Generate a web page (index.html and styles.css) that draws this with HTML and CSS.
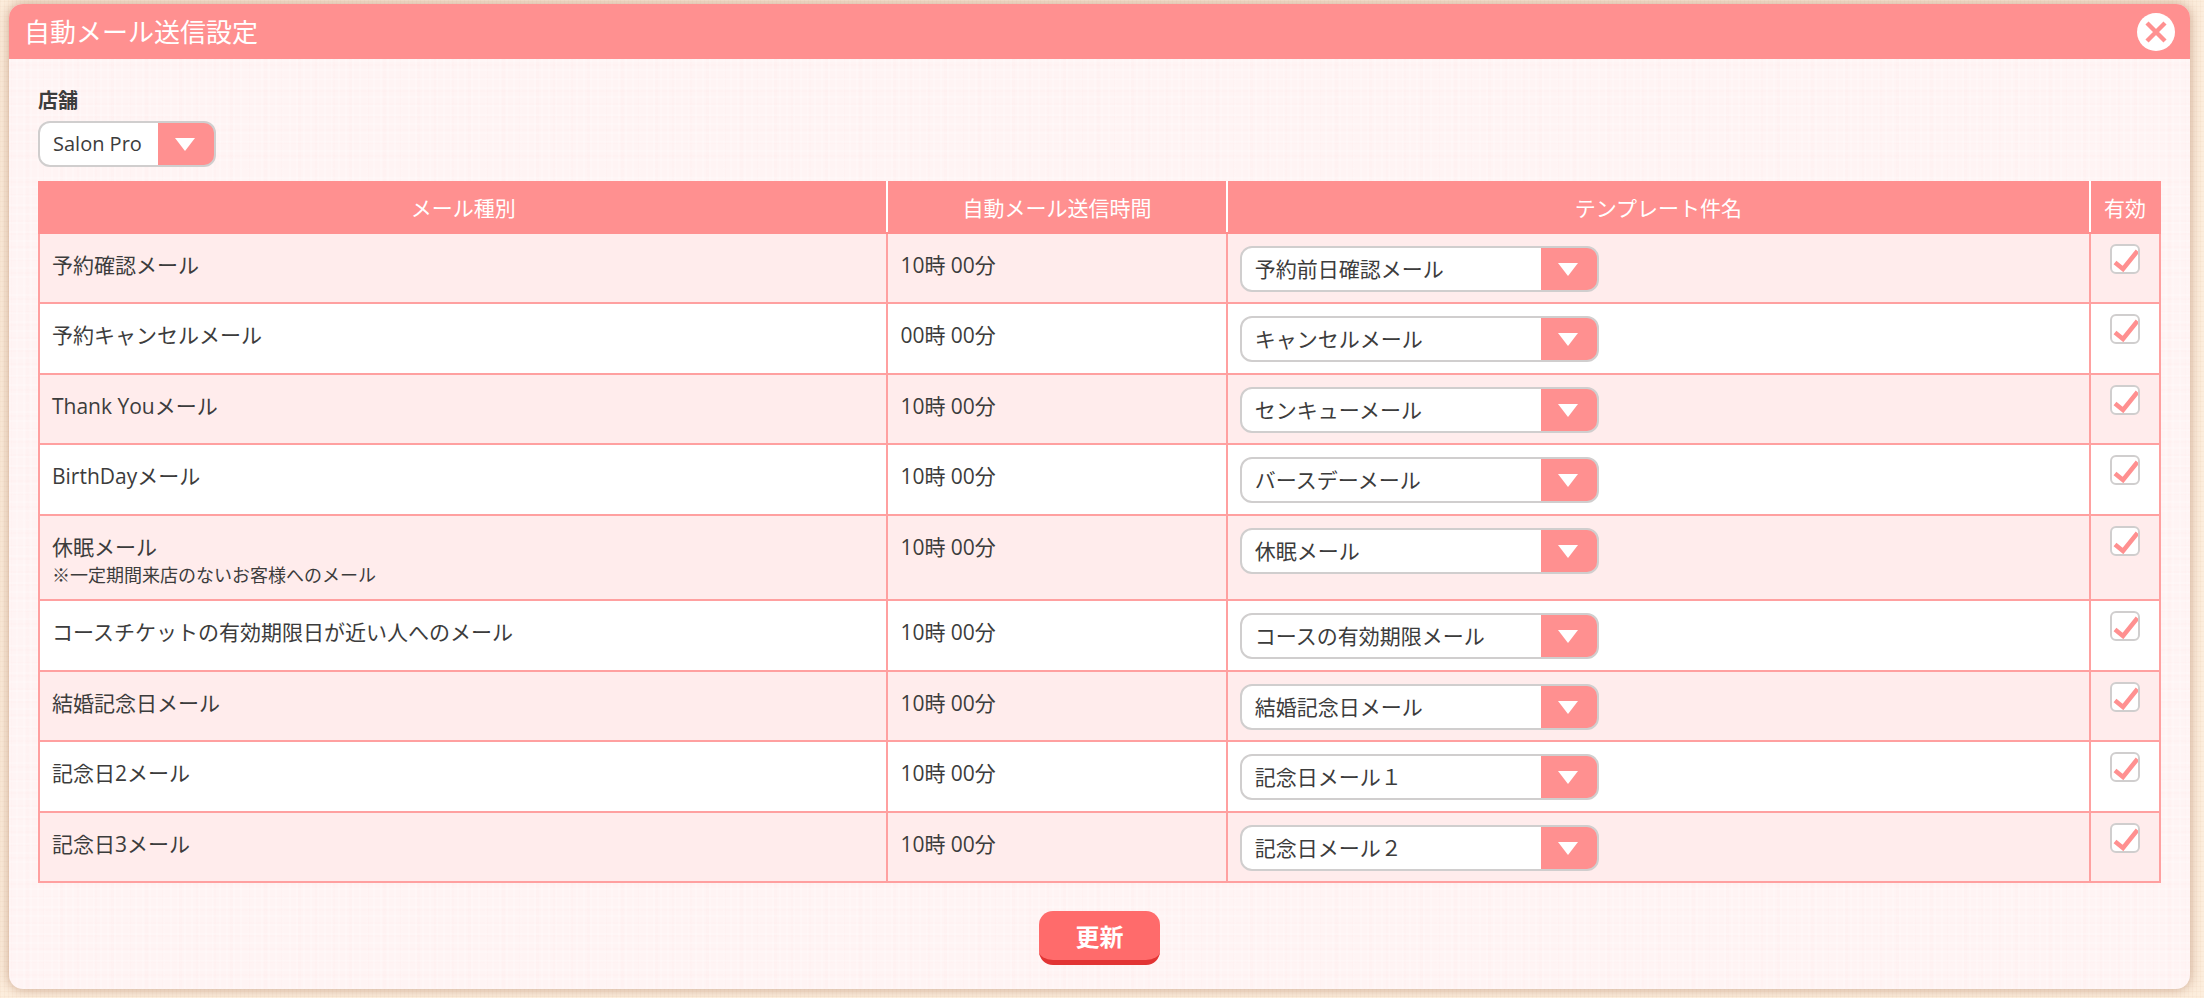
FILE: index.html
```
<!DOCTYPE html>
<html lang="ja">
<head>
  <meta charset="UTF-8">
  <meta name="viewport" content="width=device-width, initial-scale=1.0">
  <title>自動メール送信設定</title>
  <link rel="stylesheet" href="styles.css">
</head>
<body>
  <div class="dialog">
    <div class="dialog-header">
      <h1>自動メール送信設定</h1>
      <button type="button" class="close-btn" aria-label="閉じる">
        <svg viewBox="0 0 38 38">
          <circle cx="19" cy="19" r="19" fill="#fff"/>
          <path d="M10 10 L28 28 M28 10 L10 28" stroke="#ff9090" stroke-width="4.4"/>
        </svg>
      </button>
    </div>

    <form class="dialog-body">
      <label class="shop-label" for="shop">店舗</label>
      <select id="shop" class="select-box shop">
        <option>Salon Pro</option>
      </select>

      <table class="mail-table">
        <thead>
          <tr>
            <th class="col-type">メール種別</th>
            <th class="col-time">自動メール送信時間</th>
            <th class="col-template">テンプレート件名</th>
            <th class="col-active">有効</th>
          </tr>
        </thead>
        <tbody>
          <tr>
            <td>予約確認メール</td>
            <td>10時 00分</td>
            <td class="template"><select class="select-box" aria-label="予約確認メールのテンプレート"><option>予約前日確認メール</option></select></td>
            <td class="active"><input type="checkbox" class="check" aria-label="予約確認メールを有効" checked></td>
          </tr>
          <tr>
            <td>予約キャンセルメール</td>
            <td>00時 00分</td>
            <td class="template"><select class="select-box" aria-label="予約キャンセルメールのテンプレート"><option>キャンセルメール</option></select></td>
            <td class="active"><input type="checkbox" class="check" aria-label="予約キャンセルメールを有効" checked></td>
          </tr>
          <tr>
            <td>Thank Youメール</td>
            <td>10時 00分</td>
            <td class="template"><select class="select-box" aria-label="Thank Youメールのテンプレート"><option>センキューメール</option></select></td>
            <td class="active"><input type="checkbox" class="check" aria-label="Thank Youメールを有効" checked></td>
          </tr>
          <tr>
            <td>BirthDayメール</td>
            <td>10時 00分</td>
            <td class="template"><select class="select-box" aria-label="BirthDayメールのテンプレート"><option>バースデーメール</option></select></td>
            <td class="active"><input type="checkbox" class="check" aria-label="BirthDayメールを有効" checked></td>
          </tr>
          <tr>
            <td>休眠メール<small class="note">※一定期間来店のないお客様へのメール</small></td>
            <td>10時 00分</td>
            <td class="template"><select class="select-box" aria-label="休眠メールのテンプレート"><option>休眠メール</option></select></td>
            <td class="active"><input type="checkbox" class="check" aria-label="休眠メールを有効" checked></td>
          </tr>
          <tr>
            <td>コースチケットの有効期限日が近い人へのメール</td>
            <td>10時 00分</td>
            <td class="template"><select class="select-box" aria-label="コースチケットのテンプレート"><option>コースの有効期限メール</option></select></td>
            <td class="active"><input type="checkbox" class="check" aria-label="コースチケットのメールを有効" checked></td>
          </tr>
          <tr>
            <td>結婚記念日メール</td>
            <td>10時 00分</td>
            <td class="template"><select class="select-box" aria-label="結婚記念日メールのテンプレート"><option>結婚記念日メール</option></select></td>
            <td class="active"><input type="checkbox" class="check" aria-label="結婚記念日メールを有効" checked></td>
          </tr>
          <tr>
            <td>記念日2メール</td>
            <td>10時 00分</td>
            <td class="template"><select class="select-box" aria-label="記念日2メールのテンプレート"><option>記念日メール１</option></select></td>
            <td class="active"><input type="checkbox" class="check" aria-label="記念日2メールを有効" checked></td>
          </tr>
          <tr>
            <td>記念日3メール</td>
            <td>10時 00分</td>
            <td class="template"><select class="select-box" aria-label="記念日3メールのテンプレート"><option>記念日メール２</option></select></td>
            <td class="active"><input type="checkbox" class="check" aria-label="記念日3メールを有効" checked></td>
          </tr>
        </tbody>
      </table>

      <div class="actions">
        <button type="submit" class="update-btn">更新</button>
      </div>
    </form>
  </div>
</body>
</html>
```
FILE: styles.css
```
* {
  box-sizing: border-box;
}

body {
  margin: 0;
  padding: 4px 14px 8px 9px;
  font-family: "Open Sans", "Noto Sans CJK JP", sans-serif;
  font-size: 21px;
  line-height: 28px;
  color: #3c3c3c;
  /* linen texture */
  background-color: #fdeedd;
  background-image:
    repeating-linear-gradient(90deg, rgba(222, 180, 140, 0.08) 0 1px, transparent 1px 4px),
    repeating-linear-gradient(0deg, rgba(222, 180, 140, 0.08) 0 1px, transparent 1px 5px);
}

.dialog {
  border-radius: 14px;
  overflow: hidden;
  box-shadow: 0 0 12px rgba(150, 90, 60, 0.5);
  /* woven look from threads with different spacing */
  background-color: #fff4f4;
  background-image:
    repeating-linear-gradient(90deg, rgba(255, 255, 255, 0.2) 0 2px, transparent 2px 7px),
    repeating-linear-gradient(0deg, rgba(255, 255, 255, 0.2) 0 2px, transparent 2px 9px),
    repeating-linear-gradient(90deg, rgba(255, 225, 225, 0.1) 0 3px, transparent 3px 17px),
    repeating-linear-gradient(0deg, rgba(255, 225, 225, 0.1) 0 2px, transparent 2px 13px);
}

.dialog-header {
  display: flex;
  align-items: center;
  justify-content: space-between;
  height: 55px;
  padding: 0 15px;
  background: #ff9090;
  color: #fff;
}

.dialog-header h1 {
  margin: 0;
  font-size: 26px;
  font-weight: normal;
}

.close-btn {
  width: 38px;
  height: 38px;
  padding: 0;
  border: none;
  background: none;
  cursor: pointer;
}

.close-btn svg {
  display: block;
  width: 100%;
  height: 100%;
  fill: none;
}

.dialog-body {
  padding: 28px 29px 24px;
}

.shop-label {
  display: block;
  margin-bottom: 6px;
  font-size: 20px;
  font-weight: bold;
}

.select-box {
  display: block;
  width: 359px;
  height: 46px;
  padding: 0 72px 0 13px;
  border: 2px solid #d0cece;
  border-radius: 12px;
  appearance: none;
  font: inherit;
  color: inherit;
  background-color: #fff;
  background-image:
    url("data:image/svg+xml,%3Csvg xmlns='http://www.w3.org/2000/svg' width='20' height='13'%3E%3Cpath d='M0 0h20l-10 13z' fill='%23fff'/%3E%3C/svg%3E"),
    linear-gradient(#ff9090, #ff9090);
  background-repeat: no-repeat;
  background-position: right 19px center, right top;
  background-size: 20px 13px, 56px 100%;
}

.select-box.shop {
  width: auto;
  font-size: 20px;
}

.mail-table {
  width: 100%;
  margin-top: 14px;
  border-collapse: collapse;
  table-layout: fixed;
}

.mail-table th {
  height: 51px;
  padding: 0;
  border: 2px solid #ff9090;
  border-right-color: #fff;
  background: #ff9090;
  color: #fff;
  font-weight: normal;
}

.mail-table th:last-child {
  border-right-color: #ff9090;
}

.col-type {
  width: 40%;
}

.col-time {
  width: 16%;
}

.col-active {
  width: 70px;
}

.mail-table td {
  height: 70px;
  padding: 17px 12px 10px;
  border: 2px solid #ffa0a0;
  background: #fff;
  vertical-align: top;
}

.mail-table tr:nth-child(odd) td {
  background: #ffecec;
}

.mail-table tr:nth-child(even) td {
  height: 71px;
}

.note {
  display: block;
  font-size: 18px;
}

.mail-table td.template {
  padding: 12px 12px 10px;
}

.mail-table td.active {
  padding: 10px 0;
}

.check {
  display: block;
  width: 30px;
  height: 30px;
  margin: 0 auto;
  border: 2px solid #d0cece;
  border-radius: 6px;
  appearance: none;
  background: #fff;
}

.check:checked {
  background-image: url("data:image/svg+xml,%3Csvg xmlns='http://www.w3.org/2000/svg' viewBox='0 0 26 26'%3E%3Cpath d='M3 16.5l8 6.5L25.500 5' fill='none' stroke='%23ff9090' stroke-width='4.5'/%3E%3C/svg%3E");
}

.actions {
  display: flex;
  justify-content: center;
  padding-top: 28px;
}

.update-btn {
  width: 121px;
  height: 54px;
  padding: 0;
  border: none;
  border-bottom: 5px solid #e23434;
  border-radius: 14px;
  background: #ff6b6b;
  color: #fff;
  font: bold 24px "Noto Sans CJK JP", sans-serif;
  cursor: pointer;
}
```
